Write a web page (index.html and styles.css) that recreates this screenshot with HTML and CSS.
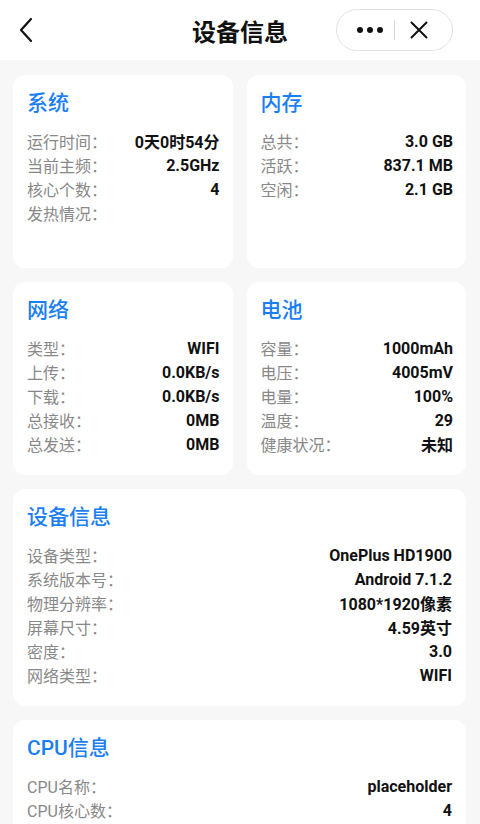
FILE: index.html
```html
<!DOCTYPE html>
<html lang="zh-CN">
<head>
<meta charset="utf-8">
<title>设备信息</title>
<link rel="stylesheet" href="styles.css">
</head>
<body>
<header class="nav">
  <button class="back" aria-label="返回">
    <svg width="16" height="26" viewBox="0 0 16 26"><path d="M13 2 L3 13 L13 24" fill="none" stroke="#111" stroke-width="2.2" stroke-linecap="round" stroke-linejoin="round"/></svg>
  </button>
  <h1 class="nav-title">设备信息</h1>
  <div class="capsule">
    <span class="dots"><i></i><i></i><i></i></span>
    <span class="sep"></span>
    <svg class="close" width="18" height="18" viewBox="0 0 18 18"><path d="M1.5 1.5 L16.5 16.5 M16.5 1.5 L1.5 16.5" stroke="#111" stroke-width="2" stroke-linecap="round"/></svg>
  </div>
</header>
<main class="content">
  <div class="grid">
    <section class="card small">
      <h2 class="card-title">系统</h2>
      <div class="row"><span class="k">运行时间：</span><span class="v">0天0时54分</span></div>
      <div class="row"><span class="k">当前主频：</span><span class="v">2.5GHz</span></div>
      <div class="row"><span class="k">核心个数：</span><span class="v">4</span></div>
      <div class="row"><span class="k">发热情况：</span><span class="v"></span></div>
    </section>
    <section class="card small">
      <h2 class="card-title">内存</h2>
      <div class="row"><span class="k">总共：</span><span class="v">3.0 GB</span></div>
      <div class="row"><span class="k">活跃：</span><span class="v">837.1 MB</span></div>
      <div class="row"><span class="k">空闲：</span><span class="v">2.1 GB</span></div>
    </section>
    <section class="card small">
      <h2 class="card-title">网络</h2>
      <div class="row"><span class="k">类型：</span><span class="v">WIFI</span></div>
      <div class="row"><span class="k">上传：</span><span class="v">0.0KB/s</span></div>
      <div class="row"><span class="k">下载：</span><span class="v">0.0KB/s</span></div>
      <div class="row"><span class="k">总接收：</span><span class="v">0MB</span></div>
      <div class="row"><span class="k">总发送：</span><span class="v">0MB</span></div>
    </section>
    <section class="card small">
      <h2 class="card-title">电池</h2>
      <div class="row"><span class="k">容量：</span><span class="v">1000mAh</span></div>
      <div class="row"><span class="k">电压：</span><span class="v">4005mV</span></div>
      <div class="row"><span class="k">电量：</span><span class="v">100%</span></div>
      <div class="row"><span class="k">温度：</span><span class="v">29</span></div>
      <div class="row"><span class="k">健康状况：</span><span class="v">未知</span></div>
    </section>
  </div>
  <section class="card">
    <h2 class="card-title">设备信息</h2>
    <div class="row"><span class="k">设备类型：</span><span class="v">OnePlus HD1900</span></div>
    <div class="row"><span class="k">系统版本号：</span><span class="v">Android 7.1.2</span></div>
    <div class="row"><span class="k">物理分辨率：</span><span class="v">1080*1920像素</span></div>
    <div class="row"><span class="k">屏幕尺寸：</span><span class="v">4.59英寸</span></div>
    <div class="row"><span class="k">密度：</span><span class="v">3.0</span></div>
    <div class="row"><span class="k">网络类型：</span><span class="v">WIFI</span></div>
  </section>
  <section class="card">
    <h2 class="card-title">CPU信息</h2>
    <div class="row"><span class="k">CPU名称：</span><span class="v">placeholder</span></div>
    <div class="row"><span class="k">CPU核心数：</span><span class="v">4</span></div>
  </section>
</main>
</body>
</html>
```
FILE: styles.css
```css
* { box-sizing: border-box; }
html, body { margin: 0; padding: 0; }
body {
  background: #f7f7f7;
  font-family: Roboto, "Noto Sans CJK SC", sans-serif;
  color: #111;
  width: 480px;
  height: 824px;
  overflow: hidden;
}
.nav {
  height: 60px;
  background: #fff;
  display: flex;
  align-items: center;
  position: relative;
  padding: 0 27px 0 18px;
}
.back {
  background: none;
  border: 0;
  padding: 0;
  width: 20px;
  height: 26px;
  display: flex;
  align-items: center;
}
.nav-title {
  position: absolute;
  left: 0;
  right: 0;
  top: 0;
  margin: 0;
  text-align: center;
  line-height: 62px;
  font-size: 24px;
  font-weight: 700;
  font-family: "Noto Sans CJK SC", sans-serif;
  pointer-events: none;
}
.capsule {
  margin-left: auto;
  width: 117px;
  height: 42px;
  border: 1px solid #e3e3e3;
  border-radius: 21px;
  display: flex;
  align-items: center;
  padding-left: 20px;
  position: relative;
  z-index: 1;
  background: #fff;
}
.dots { display: flex; gap: 4px; }
.dots i {
  display: block;
  width: 6px;
  height: 6px;
  border-radius: 50%;
  background: #111;
}
.sep {
  width: 1px;
  height: 20px;
  background: #d5d5d5;
  margin: 0 15px 0 11px;
}
.close { display: block; }
.content {
  padding: 15px 14px 14px 13px;
  display: flex;
  flex-direction: column;
  gap: 14px;
}
.grid {
  display: grid;
  grid-template-columns: 1fr 1fr;
  gap: 14px;
}
.card {
  background: #fff;
  border-radius: 12px;
  padding: 14px 14px 19px 14px;
}
.card.small { min-height: 193px; padding-right: 13px; }
.card-title {
  margin: 0 0 12px;
  font-size: 21px;
  line-height: 28px;
  font-weight: 500;
  color: #1a7ef5;
  font-family: Roboto, "Noto Sans CJK SC", sans-serif;
}
.row {
  display: flex;
  justify-content: space-between;
  align-items: center;
  height: 24px;
  font-size: 16px;
}
.k { color: #888; }
.v { font-weight: 700; color: #111; }
```
